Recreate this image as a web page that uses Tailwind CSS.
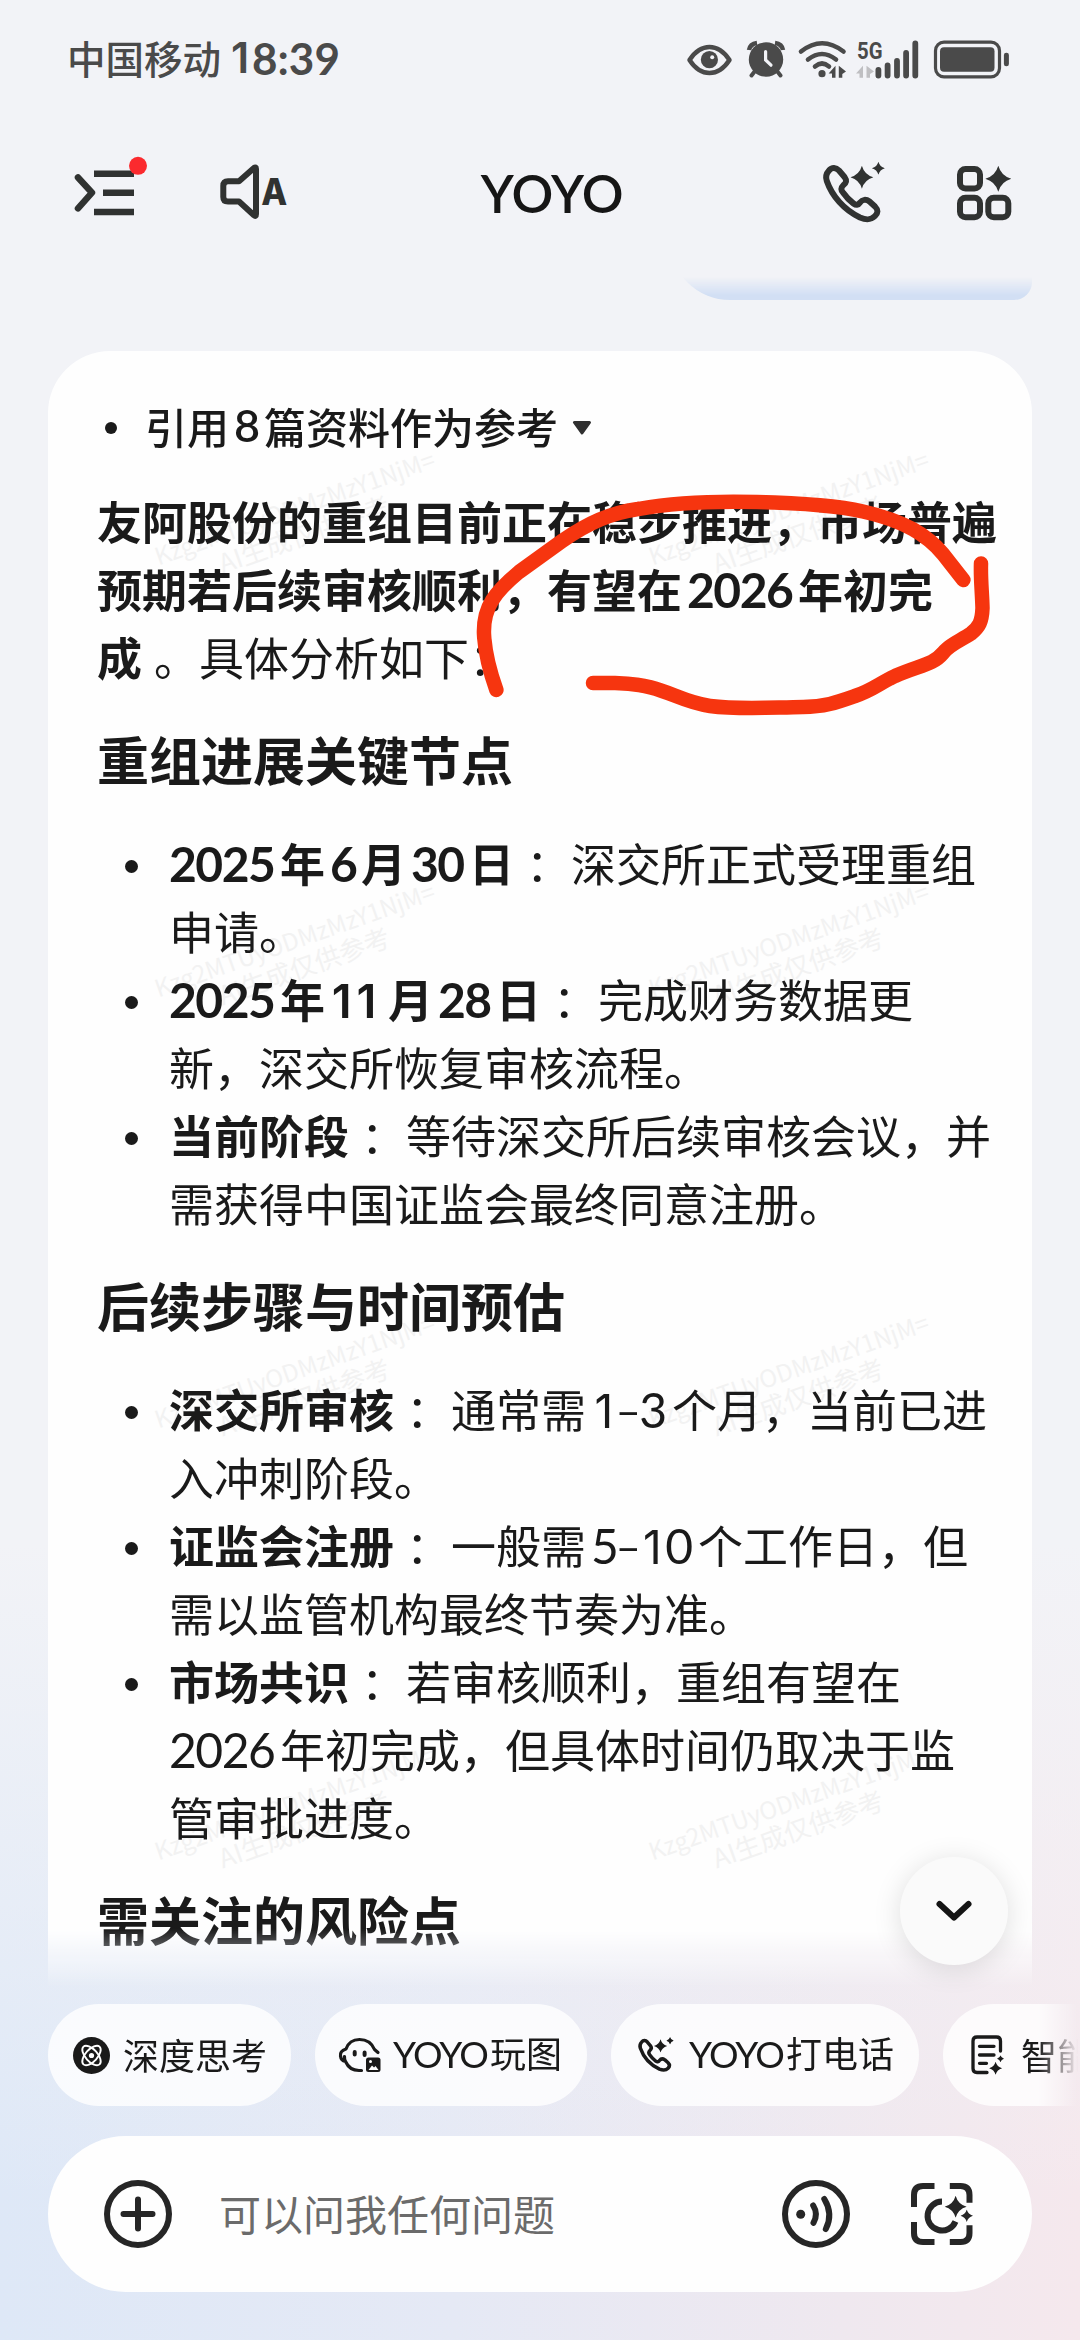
<!DOCTYPE html>
<html lang="zh-CN">
<head>
<meta charset="utf-8">
<title>YOYO</title>
<script src="https://cdn.jsdelivr.net/npm/@tailwindcss/browser@4"></script>
</head>
<body class="w-[1080px] h-[2340px] overflow-hidden bg-[#f2f3f7] font-['Noto_Sans_CJK_SC',sans-serif] text-[#1a1a1a]">
<svg class="hidden">
  <symbol id="spark" viewBox="-10 -10 20 20"><path d="M0-10Q2.2-2.2 10 0Q2.2 2.2 0 10Q-2.2 2.2-10 0Q-2.2-2.2 0-10Z" fill="currentColor" stroke="none"/></symbol>
  <symbol id="phone" viewBox="818 160 68 66">
    <path d="M827 170.5C830 166.8 834 167.3 837 170.5L842.5 177C845 180.5 844.5 182.5 841.5 185C838.5 188 839 190 841 192.5C844.5 197.5 847.5 200.5 851.5 203.5C854 205.3 856 205.5 858 202.5C860.5 199.3 864 199 867.5 201.5L873 206.5C876.5 210 876 213 873 216C868.5 220.5 864 220 858 217.5C842 210 830 196 824.8 181C823.2 176.5 824 173.8 827 170.5Z" fill="none" stroke="currentColor" stroke-width="6" stroke-linejoin="round"/>
    <use href="#spark" x="848.4" y="165.3" width="23" height="24"/>
    <use href="#spark" x="869.9" y="161.8" width="13" height="13"/>
  </symbol>
</svg>

<div class="flex h-[2340px] w-[1080px] flex-col bg-[linear-gradient(to_bottom,#f2f3f7_66%,transparent_94%),linear-gradient(to_right,#dee8f7_0%,#e5e9f5_42%,#efe8ef_78%,#f5e8ed_100%)]">

  <!-- status bar -->
  <div class="flex h-[120px] shrink-0 items-start justify-between pl-[67px] pr-[68px] text-[#4a4a4a]">
    <div class="flex h-[116px] items-center text-[38.5px] font-medium whitespace-pre"><span>中国移动</span><span class="ml-[7px] flex font-['Lato'] text-[44px] font-bold"><span class="w-[24px] text-center font-['Inter'] text-[43px] font-semibold">1</span><span>8:39</span></span></div>
    <svg class="h-[116px] w-[328px]" viewBox="684 0 328 116" fill="none" stroke="currentColor">
      <path d="M689.5 60Q698 47 709.5 47T729.500 60Q721 73 709.500 73T689.500 60Z" stroke-width="4.500" stroke-linejoin="round"/>
      <circle cx="709.400" cy="59.700" r="8.600" fill="currentColor" stroke="none"/><circle cx="712.200" cy="57.200" r="2" fill="#f2f3f7" stroke="none"/>
      <circle cx="766" cy="59.500" r="17.200" fill="currentColor" stroke="none"/>
      <path d="M749 50Q750 44 757 43M783 50Q782 44 775 43" stroke-width="4.500"/>
      <path d="M755 71L751.500 75.500M777 71L780.500 75.500" stroke-width="4" stroke-linecap="round"/>
      <path d="M765.600 51.500V60L771 65.200" stroke="#f2f3f7" stroke-width="3.200" stroke-linecap="round"/>
      <path d="M801 51.500Q822 35 843.500 51.500M808 59.500Q822 48.500 836 59.500M815 66.500Q822 60.500 829 66.500" stroke-width="4.600" stroke-linecap="round"/>
      <circle cx="822" cy="73.700" r="3.600" fill="currentColor" stroke="none"/>
      <path d="M835.500 65.700V77.700H832V73.500H828.600ZM838.800 65.700L846 71.500L842.300 74V77.700H838.800Z" fill="currentColor" stroke="none"/>
      <text x="857" y="59.300" textLength="25.500" lengthAdjust="spacingAndGlyphs" font-family="Roboto" font-weight="700" font-size="24.500" fill="currentColor" stroke="none">5G</text>
      <path d="M863 65.700V77.700H859.500V73.500H856ZM866.500 65.700L874 71.500L870 74V77.700H866.500Z" fill="#bfbfc2" stroke="none"/>
      <path d="M878.400 69.800V75.500M887.600 65.500V75.500M897 61V75.500M906.100 53V75.500M915.300 43.500V75.500" stroke-width="5.800" stroke-linecap="round"/>
      <rect x="935.500" y="42.200" width="64" height="34.600" rx="8.500" stroke-width="3.200"/>
      <rect x="940" y="47.300" width="54.500" height="24.400" rx="4" fill="currentColor" stroke="none"/>
      <rect x="1003.900" y="52.700" width="5" height="13.600" rx="2.400" fill="currentColor" stroke="none"/>
    </svg>
  </div>

  <!-- title bar -->
  <header class="flex h-[157px] shrink-0 items-start justify-between pl-[72px] pr-[66px] pt-[33px] text-[#303231]">
    <div class="flex w-[376px] gap-[70px]">
      <svg class="h-[80px] w-[76px]" viewBox="72 153 76 80" fill="none" stroke="currentColor" stroke-width="6.500">
        <path d="M78 177.500L92 192.700L78 208.300" stroke-linecap="round" stroke-linejoin="round"/>
        <path d="M94 173.700H134M103 192.700H134M94 212H134"/>
        <circle cx="138" cy="165.800" r="9" fill="#fb2a2e" stroke="none"/>
      </svg>
      <svg class="h-[80px] w-[72px]" viewBox="218 153 72 80" fill="none" stroke="currentColor" stroke-width="6" stroke-linejoin="round">
        <path d="M228 181.300H239L254 168Q256 166.500 256 169V214Q256 217 254 215.300L239 201.500H228Q223.300 201.500 223.300 197V186Q223.300 181.300 228 181.300Z"/>
        <text x="274.300" y="204.500" text-anchor="middle" font-family="Inter" font-weight="800" font-size="37" fill="currentColor" stroke="none" textLength="26" lengthAdjust="spacingAndGlyphs">A</text>
      </svg>
    </div>
    <h1 class="flex h-[79px] items-center font-['Lato'] text-[52px] leading-none font-semibold tracking-[-0.3px] text-[#161616]">YOYO</h1>
    <div class="flex w-[358px] justify-end gap-[66px]">
      <svg class="mt-[7px] h-[66px] w-[68px]"><use href="#phone"/></svg>
      <svg class="h-[80px] w-[60px]" viewBox="954 153 60 80" fill="none" stroke="currentColor" stroke-width="6">
        <rect x="960" y="169" width="20" height="19.500" rx="5.500"/><rect x="960" y="197.700" width="20" height="19.500" rx="5.500"/><rect x="988.300" y="197.700" width="20" height="19.500" rx="5.500"/>
        <use href="#spark" x="985.300" y="165.300" width="26" height="27"/>
      </svg>
    </div>
  </header>

  <!-- conversation -->
  <main class="flex h-[1713px] shrink-0 flex-col overflow-hidden px-12 [mask-image:linear-gradient(to_bottom,transparent_0px,black_18px,black_1652px,transparent_1711px)]">
    <div class="h-[23px] w-[362px] shrink-0 self-end overflow-hidden"><div class="-mt-[100px] h-[123px] rounded-bl-[60px] rounded-br-[18px] bg-[#d2dff4]"></div></div>
    <article class="relative mt-[51px] h-[1700px] shrink-0 overflow-hidden rounded-t-[62px] bg-[#fefefe] pl-[49px] pt-[45px] whitespace-nowrap">
      <div class="absolute left-[101px] top-[141px] grid grid-cols-[494px_494px] auto-rows-[431.500px] text-[#f2f2f2]" id="marks"></div>

      <div class="relative flex h-[64px] items-center pl-[8px] text-[42px] font-medium">
        <span class="size-[12px] rounded-full bg-[#1a1a1a]"></span>
        <span class="ml-[28px] mt-[-5px] flex h-[64px] items-center">引用<b class="mx-[5px] inline-block w-[25px] text-center font-['Lato'] text-[45px] font-semibold">8</b>篇资料作为参考</span>
        <svg class="ml-[14px] h-[14px] w-[20px]" viewBox="0 0 20 14"><path d="M2.500 1.500H17.500L10 12Z" fill="#303030" stroke="#303030" stroke-width="3" stroke-linejoin="round"/></svg>
      </div>

      <div class="relative mt-[27px] text-[45px] leading-[68px]">
        <div class="h-[68px] font-bold">友阿股份的重组目前正在稳步推进，市场普遍</div>
        <div class="h-[68px] font-bold">预期若后续审核顺利，有望在<span class="mx-[5px] inline-block w-[106px] font-['Lato'] text-[48px] leading-none tracking-[-1.500px]">2026</span>年初完</div>
        <div class="h-[68px]"><b>成</b><span class="ml-[12px]">。具体分析如下：</span></div>
      </div>

      <h2 class="relative mt-[29px] h-[78px] text-[52px] leading-[78px] font-bold">重组进展关键节点</h2>
      <ul class="relative mt-[31px] ml-[72px] text-[45px] leading-[68px]">
        <li class="relative h-[136px] before:absolute before:left-[-44px] before:top-[31px] before:size-[13px] before:rounded-full before:bg-[#1a1a1a]">
          <b><span class="mr-[5px] inline-block w-[106px] font-['Lato'] text-[48px] leading-none tracking-[-1.500px]">2025</span>年<span class="mx-[5px] inline-block w-[26px] font-['Lato'] text-[48px] leading-none tracking-[-1.500px]">6</span>月<span class="mx-[5px] inline-block w-[53px] font-['Lato'] text-[48px] leading-none tracking-[-1.500px]">30</span>日</b><span class="ml-[12px]">：深交所正式受理重组</span><br>申请。</li>
        <li class="relative h-[136px] before:absolute before:left-[-44px] before:top-[31px] before:size-[13px] before:rounded-full before:bg-[#1a1a1a]">
          <b><span class="mr-[5px] inline-block w-[106px] font-['Lato'] text-[48px] leading-none tracking-[-1.500px]">2025</span>年<span class="mx-[5px] inline-block w-[53px] text-center font-['Inter'] text-[47px] leading-none font-semibold tracking-[5px]">11</span>月<span class="mx-[5px] inline-block w-[53px] font-['Lato'] text-[48px] leading-none tracking-[-1.500px]">28</span>日</b><span class="ml-[12px]">：完成财务数据更</span><br>新，深交所恢复审核流程。</li>
        <li class="relative h-[136px] before:absolute before:left-[-44px] before:top-[31px] before:size-[13px] before:rounded-full before:bg-[#1a1a1a]">
          <b>当前阶段</b><span class="ml-[12px]">：等待深交所后续审核会议，并</span><br>需获得中国证监会最终同意注册。</li>
      </ul>

      <h2 class="relative mt-[29px] h-[78px] text-[52px] leading-[78px] font-bold">后续步骤与时间预估</h2>
      <ul class="relative mt-[31px] ml-[72px] text-[45px] leading-[68px]">
        <li class="relative h-[136px] before:absolute before:left-[-44px] before:top-[31px] before:size-[13px] before:rounded-full before:bg-[#1a1a1a]">
          <b>深交所审核</b><span class="ml-[12px]">：通常需<span class="mx-[5px] inline-flex w-[76px] items-baseline leading-none font-['Inter']"><span class="w-[26px] text-center text-[46px]">1</span><span class="w-[23px] scale-x-125 text-center text-[46px] font-light">-</span><span class="font-['Lato'] text-[48px]">3</span></span>个月，当前已进</span><br>入冲刺阶段。</li>
        <li class="relative h-[136px] before:absolute before:left-[-44px] before:top-[31px] before:size-[13px] before:rounded-full before:bg-[#1a1a1a]">
          <b>证监会注册</b><span class="ml-[12px]">：一般需<span class="mx-[5px] inline-flex w-[102px] items-baseline leading-none font-['Inter']"><span class="w-[26px] font-['Lato'] text-[48px]">5</span><span class="w-[23px] scale-x-125 text-center text-[46px] font-light">-</span><span class="w-[26px] text-center text-[46px]">1</span><span class="font-['Lato'] text-[48px]">0</span></span>个工作日，但</span><br>需以监管机构最终节奏为准。</li>
        <li class="relative h-[204px] before:absolute before:left-[-44px] before:top-[31px] before:size-[13px] before:rounded-full before:bg-[#1a1a1a]">
          <b>市场共识</b><span class="ml-[12px]">：若审核顺利，重组有望在</span><br><span class="mr-[5px] inline-block w-[106px] font-['Lato'] text-[48px] leading-none tracking-[-1.500px]">2026</span>年初完成，但具体时间仍取决于监<br>管审批进度。</li>
      </ul>

      <h2 class="relative mt-[29px] h-[78px] text-[52px] leading-[78px] font-bold">需关注的风险点</h2>
    </article>
  </main>

  <!-- shortcut chips -->
  <div class="mt-[14px] flex h-[102px] shrink-0 gap-6 overflow-hidden pl-12 text-[36px] whitespace-nowrap [mask-image:linear-gradient(to_right,black_1038px,transparent_1078px)]">
    <div class="flex w-[243px] shrink-0 items-center rounded-full bg-white/80 pl-[25px]">
      <svg class="size-[37px]" viewBox="-18.500 -18.500 37 37" fill="none" stroke="#fff" stroke-width="1.900"><circle r="18.500" fill="#1a1a1a" stroke="none"/><ellipse rx="12" ry="6" transform="rotate(48)"/><ellipse rx="12" ry="6" transform="rotate(-48)"/><circle r="2.600" fill="#fff" stroke="none"/></svg>
      <span class="ml-[13px] mt-[-3px]">深度思考</span>
    </div>
    <div class="flex w-[272px] shrink-0 items-center rounded-full bg-white/80 pl-[21px]">
      <svg class="h-[42px] w-[46px]" viewBox="0 0 46 42" fill="none" stroke="#1a1a1a" stroke-width="3.200" stroke-linecap="round" stroke-linejoin="round">
        <path d="M42 18.500L38.500 15.500C36 9.500 30.500 5.500 23.500 5.500C17 5.500 12 9.300 10 15C6 16.300 4 19 4.500 22C4.800 24.800 6.700 26.800 9.500 27.500C12 33 17 36.500 23 36.500H25.500M9.500 27.500Q8.300 25 8.500 22.500"/>
        <path d="M18.700 18V20.500M28.600 18.500V21" stroke-width="4"/>
        <rect x="30" y="23.500" width="14.500" height="14.500" rx="2.500" fill="#1a1a1a" stroke="none"/><path d="M32.500 36L36 31.500L38 33.500L39.500 32L42.500 36Z" fill="#fff" stroke="none"/><circle cx="34.500" cy="27.500" r="1.500" fill="#fff" stroke="none"/>
      </svg>
      <span class="ml-[11px] flex mt-[-3px] items-baseline"><span class="w-[97px] font-['Lato'] text-[37px] tracking-[-1.800px]">YOYO</span>玩图</span>
    </div>
    <div class="flex w-[308px] shrink-0 items-center rounded-full bg-white/80 pl-[25px]">
      <svg class="h-[38px] w-[40px]"><use href="#phone"/></svg>
      <span class="ml-[13px] flex mt-[-3px] items-baseline"><span class="w-[97px] font-['Lato'] text-[37px] tracking-[-1.800px]">YOYO</span>打电话</span>
    </div>
    <div class="flex w-[243px] shrink-0 items-center rounded-full bg-white/80 pl-[26px]">
      <svg class="h-[42px] w-[37px]" viewBox="969 2034 37 42" fill="none" stroke="#1a1a1a" stroke-width="3.300" stroke-linecap="round">
        <path d="M1000.500 2051V2041Q1000.500 2037 996.500 2037H977Q973 2037 973 2041V2068.500Q973 2072.500 977 2072.500H987M979.500 2046.300H994M979.500 2055H994M979.500 2063.300H986.500"/>
        <use href="#spark" x="989.100" y="2061.500" width="13" height="13.500"/><use href="#spark" x="997" y="2055.300" width="7" height="7"/>
      </svg>
      <span class="ml-[15px] mt-[-3px]">智能总结</span>
    </div>
  </div>

  <!-- input bar -->
  <div class="mx-12 mt-[30px] flex h-[156px] shrink-0 items-center rounded-full bg-[#fefefe] pl-[56px] pr-[56px] text-[#262626]">
    <svg class="size-[68px]" viewBox="0 0 68 68" fill="none" stroke="currentColor" stroke-width="6"><circle cx="34" cy="34" r="31"/><path d="M19.500 34H48.500M34 19.500V48.500" stroke-linecap="round"/></svg>
    <span class="ml-[47px] mt-[-4px] flex-1 text-[42px] text-[#6b6b6b]">可以问我任何问题</span>
    <svg class="size-[68px]" viewBox="782 2180 68 68" fill="none" stroke="currentColor" stroke-width="6" stroke-linecap="round"><circle cx="816" cy="2214" r="31"/><circle cx="800.700" cy="2214.300" r="4.500" fill="currentColor" stroke="none"/><path d="M813.200 2205.500Q818.500 2214 813.500 2222.800M824.300 2199Q833.500 2214 825.800 2229"/></svg>
    <svg class="ml-[58px] size-[68px]" viewBox="0 0 68 68" fill="none" stroke="currentColor" stroke-width="6">
      <path d="M6 27V15Q6 6 15 6H26.500M41.800 6H52.500Q61.500 6 61.500 15V22.700M6 42V53Q6 62 15 62H26.500M41.800 62H52.500Q61.500 62 61.500 53V45.300"/>
      <path d="M34 21.500A14.500 14.500 0 1 0 47.500 41.500"/>
      <use href="#spark" x="36.400" y="15.700" width="22.500" height="22"/><use href="#spark" x="52.500" y="29.500" width="12.500" height="12.500"/>
    </svg>
  </div>
</div>

<!-- scroll-to-bottom button -->
<div class="absolute left-[900px] top-[1857px] flex size-[108px] items-center justify-center rounded-full bg-[#fafafa] shadow-[0_4px_28px_rgba(0,0,0,0.13)]">
  <svg class="h-[26px] w-[42px]" viewBox="0 0 42 26" fill="none" stroke="#141414" stroke-width="6" stroke-linecap="round" stroke-linejoin="round"><path d="M6.500 6L21 19.500L35.500 6"/></svg>
</div>

<!-- hand-drawn marker loop -->
<svg class="absolute left-0 top-0 h-[900px] w-[1080px]" viewBox="0 0 1080 900" fill="none" stroke="#f6350f" stroke-width="14.500" stroke-linecap="round" stroke-linejoin="round">
  <path d="M496.400 690C490 672 485 655 484 634C483 607 495 592 519 572L562 541C588 523 610 513 638 509C680 501.500 720 501 757 502C800 503 835 505 863 511.500C905 521 927 535 943 554L963.400 580"/>
  <path d="M981 563.500C980.500 580 982 590 982.500 608C982 622 979 627 971 633.500C960 641 950 644 943 653C933 665 920 665 895 676C878 684 873 690 855 696C838 702 825 707 803 707C770 707.500 740 710 710 706C675 701 665 684 615 683H593"/>
</svg>

<script>
  const marks = document.getElementById('marks');
  for (let i = 0; i < 8; i++) {
    const cell = document.createElement('div');
    cell.innerHTML = '<div class="w-[300px] -rotate-[19.500deg] text-center text-[26px] leading-[28px]"><div class="font-[\'Roboto\'] text-[24px]">Kzg2MTUyODMzMzY1NjM=</div><div>AI生成仅供参考</div></div>';
    marks.appendChild(cell);
  }
</script>
</body>
</html>
